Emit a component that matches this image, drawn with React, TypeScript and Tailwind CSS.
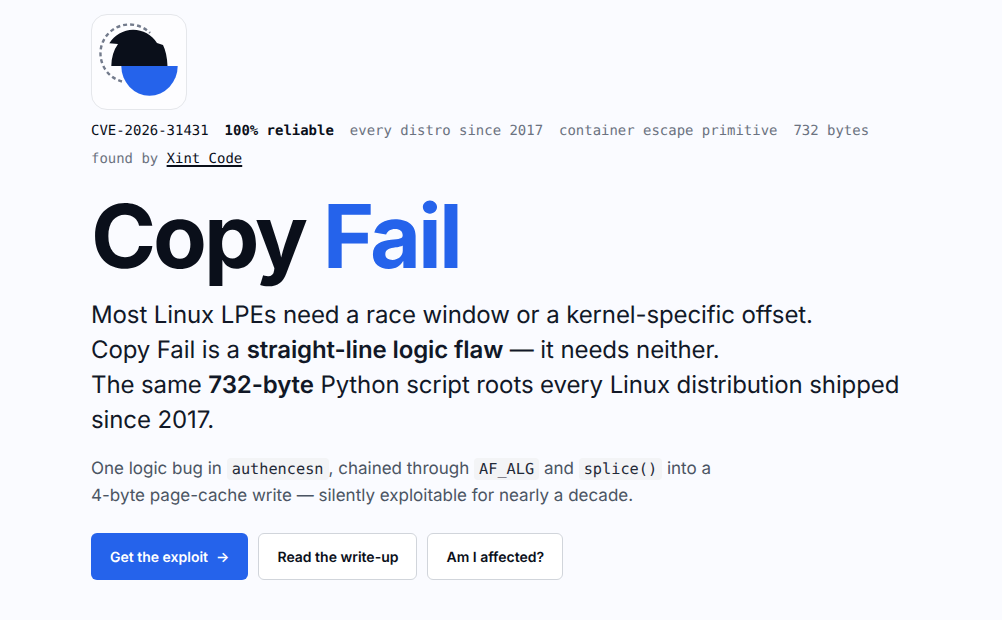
import React from "react";

const mono = "font-['DejaVu_Sans_Mono','Liberation_Mono',monospace]";

const Code = ({ children }: { children: React.ReactNode }) => (
  <code className={`${mono} bg-[#f3f4f6] rounded-[4px] px-[5px] py-[2px] text-[15.25px] text-[#1f2937]`}>{children}</code>
);

const Logo = () => (
  <div className="w-24 h-24 rounded-2xl border border-[#e5e7eb] bg-[#fdfdff]">
    <svg width="94" height="94" viewBox="0 0 94 94">
      <path d="M30 66.5 A29 29 0 1 1 58 18" fill="none" stroke="#737b8c" strokeWidth="2.4" strokeDasharray="4 3" />
      <path
        d="M17.3 28.3 A28 28 0 0 1 65 28 L71 30 Q75 38 75.5 51 L19.3 51 Q19.5 38 26 29 Z"
        fill="#0a0f1a"
      />
      <path d="M29.3 51 H85.7 A28.2 29.7 0 0 1 29.3 51 Z" fill="#2563eb" />
    </svg>
  </div>
);

export default function App() {
  return (
    <div className="min-h-[620px] bg-[#fafbff] pl-[91px] pt-[14px] font-['Inter',sans-serif] text-[#0a0f1a] [text-rendering:geometricPrecision]">
      <Logo />
      <div className={`${mono} mt-[7px] text-[13.96px] leading-[28px] text-[#6b7280] w-[800px]`}>
        <div className="flex gap-4">
          <span className="text-[#0a0f1a]">CVE-2026-31431</span>
          <span className="text-[#0a0f1a] font-bold">100% reliable</span>
          <span>every distro since 2017</span>
          <span>container escape primitive</span>
          <span>732 bytes</span>
        </div>
        <div>
          found by <span className="text-[#0a0f1a] underline decoration-[1.5px] underline-offset-2">Xint Code</span>
        </div>
      </div>
      <h1 className="mt-[16px] text-[88px] leading-[97px] font-bold tracking-[-0.034em]">
        Copy <span className="text-[#2563eb]">Fail</span>
      </h1>
      <p className="mt-[11px] w-[820px] text-[24px] leading-[35px] tracking-[-0.11px] text-[#111827]">
        Most Linux LPEs need a race window or a kernel-specific offset.
        <br />
        Copy Fail is a <strong className="font-semibold">straight-line logic flaw</strong> — it needs neither.
        <br />
        The same <strong className="font-semibold">732-byte</strong> Python script roots every Linux distribution shipped since 2017.
      </p>
      <p className="mt-[19px] text-[17px] leading-[27px] text-[#4b5563]">
        One logic bug in <Code>authencesn</Code>, chained through <Code>AF_ALG</Code> and <Code>splice()</Code> into a
        <br />
        4-byte page-cache write — silently exploitable for nearly a decade.
      </p>
      <div className="mt-[23px] flex gap-[10px] text-[14px] font-semibold">
        <a className="flex h-[47px] items-center gap-2 rounded-md bg-[#2563eb] px-[19px] pt-px text-white">
          Get the exploit <span>→</span>
        </a>
        <a className="flex h-[47px] items-center rounded-md border border-[#d1d5db] bg-white px-[18px] pt-px">Read the write-up</a>
        <a className="flex h-[47px] items-center rounded-md border border-[#d1d5db] bg-white px-[18px] pt-px">Am I affected?</a>
      </div>
    </div>
  );
}
